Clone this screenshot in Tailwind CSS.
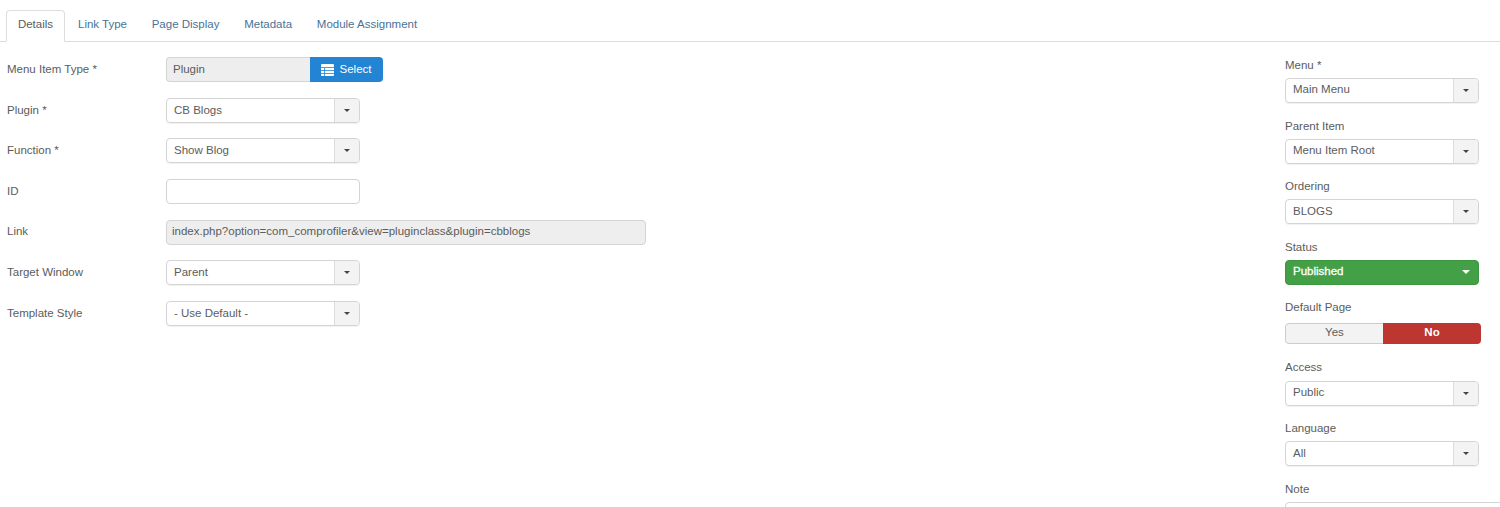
<!DOCTYPE html>
<html><head><meta charset="utf-8"><script src="https://cdn.jsdelivr.net/npm/@tailwindcss/browser@4"></script></head>
<body class="bg-white">
<div class="w-[1500px] h-[507px] overflow-hidden font-['Liberation_Sans',Arial,sans-serif] text-[11.5px] text-[#5c5c5c] pt-[10px]">
  <div class="flex h-[32px] border-b border-[#ddd] pl-[6px]">
    <div class="h-[32px] w-[59px] flex items-center justify-center bg-white border border-[#ddd] border-b-white rounded-t-[4px] pb-[2px]">Details</div>
    <div class="flex h-[30px] items-center text-[#4a7297] pl-[13px] gap-[24.7px]"><span>Link Type</span><span>Page Display</span><span>Metadata</span><span>Module Assignment</span></div>
  </div>
  <div class="flex justify-between">
    <div class="flex flex-col gap-[16px] pt-[15.4px] pl-[7px]">
      <div class="flex items-center h-[24.6px]"><div class="w-[159px]">Menu Item Type *</div><div class="flex h-[25px] w-[217px]"><div class="w-[144px] bg-[#eee] border border-[#d4d4d4] border-r-0 rounded-l-[4px] flex items-center pl-[6px]">Plugin</div><div class="flex-1 bg-[#2384d3] rounded-r-[4px] text-white flex items-center justify-center gap-[6px] pr-[1px]"><svg width="13" height="12" viewBox="0 0 13 12"><path fill="#fff" d="M1 0h11a1 1 0 0 1 1 1v10a1 1 0 0 1-1 1H1a1 1 0 0 1-1-1V1a1 1 0 0 1 1-1z"/><path stroke="#2384d3" stroke-width="0.8" d="M0 3.5h13M0 6.5h13M0 9.5h13M3.5 3.5v8.5"/></svg>Select</div></div></div>
      <div class="flex items-center h-[24.6px]"><div class="w-[159px]">Plugin *</div><div class="flex h-[25px] w-[194px] border border-[#d4d4d4] rounded-[4px] shadow-[0_1px_1px_rgba(0,0,0,0.06)]"><div class="flex-1 flex items-center pl-[7px]">CB Blogs</div><div class="w-[25px] bg-[#f3f3f3] border-l border-[#ddd] rounded-r-[4px] flex items-center justify-center"><div class="border-x-[3px] border-t-[3px] border-x-transparent border-t-[#444]"></div></div></div></div>
      <div class="flex items-center h-[24.6px]"><div class="w-[159px]">Function *</div><div class="flex h-[25px] w-[194px] border border-[#d4d4d4] rounded-[4px] shadow-[0_1px_1px_rgba(0,0,0,0.06)]"><div class="flex-1 flex items-center pl-[7px]">Show Blog</div><div class="w-[25px] bg-[#f3f3f3] border-l border-[#ddd] rounded-r-[4px] flex items-center justify-center"><div class="border-x-[3px] border-t-[3px] border-x-transparent border-t-[#444]"></div></div></div></div>
      <div class="flex items-center h-[24.6px]"><div class="w-[159px]">ID</div><div class="h-[25px] w-[194px] border border-[#d4d4d4] rounded-[4px]"></div></div>
      <div class="flex items-center h-[24.6px]"><div class="w-[159px]">Link</div><div class="h-[25px] w-[480px] bg-[#eee] border border-[#d4d4d4] rounded-[4px] flex items-center pl-[5px]">index.php?option=com_comprofiler&amp;view=pluginclass&amp;plugin=cbblogs</div></div>
      <div class="flex items-center h-[24.6px]"><div class="w-[159px]">Target Window</div><div class="flex h-[25px] w-[194px] border border-[#d4d4d4] rounded-[4px] shadow-[0_1px_1px_rgba(0,0,0,0.06)]"><div class="flex-1 flex items-center pl-[7px]">Parent</div><div class="w-[25px] bg-[#f3f3f3] border-l border-[#ddd] rounded-r-[4px] flex items-center justify-center"><div class="border-x-[3px] border-t-[3px] border-x-transparent border-t-[#444]"></div></div></div></div>
      <div class="flex items-center h-[24.6px]"><div class="w-[159px]">Template Style</div><div class="flex h-[25px] w-[194px] border border-[#d4d4d4] rounded-[4px] shadow-[0_1px_1px_rgba(0,0,0,0.06)]"><div class="flex-1 flex items-center pl-[7px]">- Use Default -</div><div class="w-[25px] bg-[#f3f3f3] border-l border-[#ddd] rounded-r-[4px] flex items-center justify-center"><div class="border-x-[3px] border-t-[3px] border-x-transparent border-t-[#444]"></div></div></div></div>
    </div>
    <div class="w-[215px] pt-[15px] flex flex-col">
      <div class="h-[60.5px]"><div class="h-[21px] leading-[16px]">Menu *</div><div class="flex h-[25px] w-[194px] border border-[#d4d4d4] rounded-[4px] shadow-[0_1px_1px_rgba(0,0,0,0.06)]"><div class="flex-1 flex items-center pl-[7px] pb-[1px]">Main Menu</div><div class="w-[25px] bg-[#f3f3f3] border-l border-[#ddd] rounded-r-[4px] flex items-center justify-center"><div class="border-x-[3px] border-t-[3px] border-x-transparent border-t-[#444]"></div></div></div></div>
      <div class="h-[60.5px]"><div class="h-[21px] leading-[16px]">Parent Item</div><div class="flex h-[25px] w-[194px] border border-[#d4d4d4] rounded-[4px] shadow-[0_1px_1px_rgba(0,0,0,0.06)]"><div class="flex-1 flex items-center pl-[7px] pb-[1px]">Menu Item Root</div><div class="w-[25px] bg-[#f3f3f3] border-l border-[#ddd] rounded-r-[4px] flex items-center justify-center"><div class="border-x-[3px] border-t-[3px] border-x-transparent border-t-[#444]"></div></div></div></div>
      <div class="h-[60.5px]"><div class="h-[21px] leading-[16px]">Ordering</div><div class="flex h-[25px] w-[194px] border border-[#d4d4d4] rounded-[4px] shadow-[0_1px_1px_rgba(0,0,0,0.06)]"><div class="flex-1 flex items-center pl-[7px]">BLOGS</div><div class="w-[25px] bg-[#f3f3f3] border-l border-[#ddd] rounded-r-[4px] flex items-center justify-center"><div class="border-x-[3px] border-t-[3px] border-x-transparent border-t-[#444]"></div></div></div></div>
      <div class="h-[60.5px]"><div class="h-[21px] leading-[16px]">Status</div><div class="flex h-[25px] w-[194px] bg-[#43a047] border border-[#3d963f] rounded-[4px] text-white [-webkit-text-stroke:0.3px_white]"><div class="flex-1 flex items-center pl-[7px]">Published</div><div class="w-[25px] flex items-center justify-center"><div class="border-x-[4px] border-t-[4px] border-x-transparent border-t-white"></div></div></div></div>
      <div class="h-[60.5px]"><div class="h-[23.5px] leading-[16px]">Default Page</div><div class="flex h-[21px] w-[196px] rounded-[4px] overflow-hidden"><div class="w-[98px] bg-[#f3f3f3] border border-r-0 border-[#ccc] rounded-l-[4px] flex items-center justify-center">Yes</div><div class="flex-1 bg-[#bd362f] text-white font-bold flex items-center justify-center">No</div></div></div>
      <div class="h-[60.5px]"><div class="h-[21px] leading-[14px]">Access</div><div class="flex h-[25px] w-[194px] border border-[#d4d4d4] rounded-[4px] shadow-[0_1px_1px_rgba(0,0,0,0.06)]"><div class="flex-1 flex items-center pl-[7px] pb-[1px]">Public</div><div class="w-[25px] bg-[#f3f3f3] border-l border-[#ddd] rounded-r-[4px] flex items-center justify-center"><div class="border-x-[3px] border-t-[3px] border-x-transparent border-t-[#444]"></div></div></div></div>
      <div class="h-[60.5px]"><div class="h-[21px] leading-[16px]">Language</div><div class="flex h-[25px] w-[194px] border border-[#d4d4d4] rounded-[4px] shadow-[0_1px_1px_rgba(0,0,0,0.06)]"><div class="flex-1 flex items-center pl-[7px]">All</div><div class="w-[25px] bg-[#f3f3f3] border-l border-[#ddd] rounded-r-[4px] flex items-center justify-center"><div class="border-x-[3px] border-t-[3px] border-x-transparent border-t-[#444]"></div></div></div></div>
      <div><div class="h-[21px] leading-[16px]">Note</div><div class="h-[25px] w-[240px] border border-[#d4d4d4] rounded-[4px]"></div></div>
    </div>
  </div>
</div>
</body></html>
